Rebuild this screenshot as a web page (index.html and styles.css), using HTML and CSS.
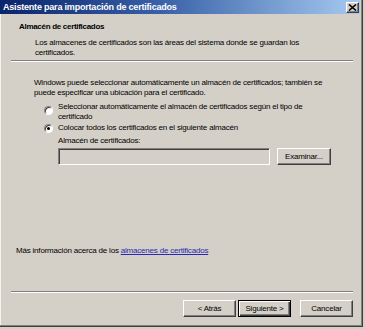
FILE: index.html
```html
<!DOCTYPE html>
<html lang="es">
<head>
<meta charset="utf-8">
<title>Asistente para importación de certificados</title>
<link rel="stylesheet" href="styles.css">
</head>
<body>
<div class="window">
  <div class="titlebar">
    <span class="title">Asistente para importación de certificados</span>
    <span class="close" aria-label="Cerrar">
      <svg width="9" height="7" viewBox="0 0 9 7" aria-hidden="true">
        <path d="M1 0.5 L8 6.5 M8 0.5 L1 6.5" stroke="#000" stroke-width="1.6" fill="none"/>
      </svg>
    </span>
  </div>
  <div class="client">
    <div class="header">
      <div class="h-title">Almacén de certificados</div>
      <div class="h-desc">Los almacenes de certificados son las áreas del sistema donde se guardan los<br>certificados.</div>
    </div>
    <div class="sep sep-top"></div>
    <div class="main">
      <p class="intro">Windows puede seleccionar automáticamente un almacén de certificados; también se<br>puede especificar una ubicación para el certificado.</p>
      <div class="options">
        <div class="opt opt-multi">
          <span class="radio"></span>
          <span class="opt-text">Seleccionar automáticamente el almacén de certificados según el tipo de<br>certificado</span>
        </div>
        <div class="opt opt-single">
          <span class="radio checked"><span class="dot"></span></span>
          <span class="opt-text">Colocar todos los certificados en el siguiente almacén</span>
        </div>
        <div class="store">
          <div class="store-label">Almacén de certificados:</div>
          <div class="store-row">
            <div class="field"></div>
            <div class="btn browse">Examinar...</div>
          </div>
        </div>
      </div>
      <p class="more">Más información acerca de los <a class="link" href="#">almacenes de certificados</a></p>
    </div>
    <div class="sep"></div>
    <div class="buttons">
      <div class="btn nav">&lt; Atrás</div>
      <div class="btn nav default">Siguiente &gt;</div>
      <div class="btn nav cancel">Cancelar</div>
    </div>
  </div>
</div>
</body>
</html>
```

FILE: styles.css
```css
html, body {
  margin: 0;
  padding: 0;
}

body {
  width: 365px;
  height: 329px;
  background: #d4d0c8;
  font-family: "Liberation Sans", Arial, sans-serif;
  font-size: 8px;
  letter-spacing: -0.2px;
  color: #000;
  overflow: hidden;
}

.window {
  width: 363px;
  height: 327px;
  box-sizing: border-box;
  display: flex;
  flex-direction: column;
  background: #d4d0c8;
  border-right: 1px solid #404040;
  border-bottom: 1px solid #404040;
  padding: 0 2px 2px 0;
  box-shadow: inset -1px -1px #808080, inset 1px 0 #f4f3f0;
}

/* title bar */
.titlebar {
  height: 14px;
  flex: none;
  display: flex;
  align-items: center;
  justify-content: space-between;
  padding: 0 1px 0 3px;
  background: linear-gradient(to right, #0a246a 0%, #3a62a8 45%, #a6caf0 100%);
}

.title {
  color: #fff;
  font-weight: bold;
  font-size: 9px;
  letter-spacing: -0.2px;
  white-space: nowrap;
}

.close {
  width: 13px;
  height: 11px;
  box-sizing: border-box;
  display: flex;
  align-items: center;
  justify-content: center;
  background: #d4d0c8;
  border: 1px solid;
  border-color: #fff #404040 #404040 #fff;
  box-shadow: inset -1px -1px #808080;
}

.close svg {
  display: block;
}

/* client area */
.client {
  flex: 1;
  display: flex;
  flex-direction: column;
}

.header {
  padding: 8px 0 0 19px;
}

.h-title {
  font-weight: bold;
  line-height: 10px;
  letter-spacing: -0.3px;
  white-space: nowrap;
}

.h-desc {
  margin: 6px 0 0 16px;
  line-height: 10px;
  white-space: nowrap;
}

.sep {
  height: 0;
  margin: 0 7px 0 11px;
  border-top: 1px solid #808080;
  border-bottom: 1px solid #fff;
  flex: none;
}

.sep-top {
  margin-top: 2px;
}

.main {
  flex: 1;
  display: flex;
  flex-direction: column;
  padding: 16px 0 35px 16px;
}

.intro {
  margin: 0 0 0 18px;
  line-height: 10px;
  white-space: nowrap;
}

.options {
  margin: 4px 0 0 28px;
}

.opt {
  display: flex;
  align-items: flex-start;
  gap: 5px;
  line-height: 10px;
  white-space: nowrap;
}

.opt-single {
  margin-top: 1px;
}

.radio {
  width: 9px;
  height: 9px;
  box-sizing: border-box;
  flex: none;
  display: flex;
  align-items: center;
  justify-content: center;
  border-radius: 50%;
  background: #fff;
  border: 1px solid;
  border-color: #808080 #fff #fff #808080;
  box-shadow: inset 1px 1px #404040;
}

.opt-multi .radio {
  margin-top: 4px;
}

.opt-single .radio {
  margin-top: 1px;
}

.dot {
  width: 3px;
  height: 3px;
  border-radius: 50%;
  background: #000;
}

.store {
  padding-left: 14px;
}

.store-label {
  margin-top: 3px;
  line-height: 10px;
  white-space: nowrap;
}

.store-row {
  margin-top: 2px;
  display: flex;
  gap: 7px;
}

.field {
  width: 212px;
  height: 17px;
  box-sizing: border-box;
  background: #d4d0c8;
  border: 1px solid;
  border-color: #808080 #fff #fff #808080;
  box-shadow: inset 1px 1px #404040;
}

.btn {
  height: 17px;
  box-sizing: border-box;
  display: flex;
  align-items: center;
  justify-content: center;
  background: #d4d0c8;
  border: 1px solid;
  border-color: #fff #404040 #404040 #fff;
  box-shadow: inset -1px -1px #808080;
  white-space: nowrap;
}

.browse {
  width: 54px;
}

.more {
  margin: auto 0 0 0;
  line-height: 10px;
  white-space: nowrap;
}

.link {
  color: #2a2ab0;
  text-decoration: underline;
}

.buttons {
  flex: none;
  display: flex;
  justify-content: flex-end;
  padding: 7px 7px 7px 0;
}

.nav {
  width: 53px;
}

.nav.default {
  margin-left: 2px;
  border: 1px solid #000;
  box-shadow: inset 1px 1px #fff, inset -1px -1px #404040, inset -2px -2px #808080;
}

.nav.cancel {
  margin-left: 9px;
}
```
